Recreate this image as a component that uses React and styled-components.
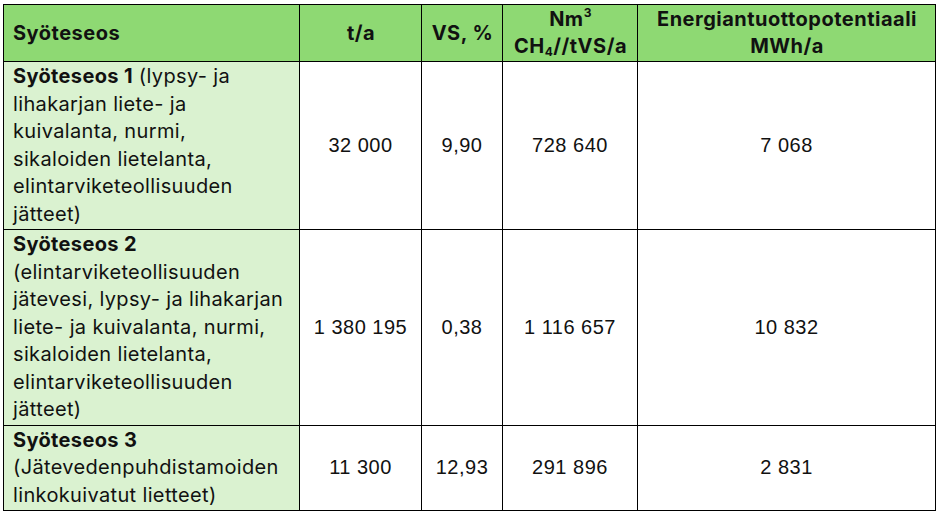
import React from 'react';
import styled, { createGlobalStyle } from 'styled-components';

const GlobalStyle = createGlobalStyle`
  body {
    margin: 0;
    background: #ffffff;
  }
`;

const Page = styled.div`
  padding: 4px 3px;
`;

const Table = styled.table`
  width: 932px;
  table-layout: fixed;
  border-collapse: collapse;
  color: #111111;
`;

const Col = styled.col`
  width: ${(p) => p.w}px;
`;

const HeadCell = styled.th`
  background: #8ed973;
  border: 1.5px solid #000;
  font-family: Inter, 'Liberation Sans', sans-serif;
  font-weight: 700;
  font-size: 20px;
  letter-spacing: 0.5px;
  line-height: 27px;
  padding: 1px 8px 1px 9px;
  text-align: ${(p) => (p.$left ? 'left' : 'center')};
  vertical-align: middle;
`;

const Sup = styled.sup`
  font-size: 12px;
  line-height: 0;
  vertical-align: 0;
  position: relative;
  top: -9px;
`;

const Sub = styled.sub`
  font-size: 12px;
  line-height: 0;
  vertical-align: 0;
  position: relative;
  top: 3px;
`;

const NameCell = styled.td`
  background: #daf2d0;
  border: 1.5px solid #000;
  font-family: Inter, 'Noto Sans', sans-serif;
  font-size: 20px;
  letter-spacing: 0.35px;
  line-height: 27.5px;
  padding: 1px 12px 1px 9px;
  vertical-align: top;
`;

const Name = styled.b`
  font-weight: 700;
`;

const NumCell = styled.td`
  border: 1.5px solid #000;
  font-family: 'Liberation Sans', Arial, sans-serif;
  font-size: 20px;
  letter-spacing: 0.5px;
  text-align: center;
  vertical-align: middle;
  padding: 0 4px;
`;

const rows = [
  {
    name: 'Syöteseos 1',
    desc: ' (lypsy- ja lihakarjan liete- ja kuivalanta, nurmi, sikaloiden lietelanta, elintarviketeollisuuden jätteet)',
    ta: '32 000',
    vs: '9,90',
    nm: '728 640',
    mwh: '7 068',
  },
  {
    name: 'Syöteseos 2',
    desc: ' (elintarviketeollisuuden jätevesi, lypsy- ja lihakarjan liete- ja kuivalanta, nurmi, sikaloiden lietelanta, elintarviketeollisuuden jätteet)',
    ta: '1 380 195',
    vs: '0,38',
    nm: '1 116 657',
    mwh: '10 832',
  },
  {
    name: 'Syöteseos 3',
    desc: ' (Jätevedenpuhdistamoiden linkokuivatut lietteet)',
    ta: '11 300',
    vs: '12,93',
    nm: '291 896',
    mwh: '2 831',
  },
];

export default function App() {
  return (
    <Page>
      <GlobalStyle />
      <Table>
        <colgroup>
          <Col w={296} />
          <Col w={122} />
          <Col w={81} />
          <Col w={135} />
          <Col w={298} />
        </colgroup>
        <thead>
          <tr>
            <HeadCell $left>Syöteseos</HeadCell>
            <HeadCell>t/a</HeadCell>
            <HeadCell>VS, %</HeadCell>
            <HeadCell>
              Nm<Sup>3</Sup>
              <br />
              CH<Sub>4</Sub>//tVS/a
            </HeadCell>
            <HeadCell>
              Energiantuottopotentiaali
              <br />
              MWh/a
            </HeadCell>
          </tr>
        </thead>
        <tbody>
          {rows.map((r) => (
            <tr key={r.name}>
              <NameCell>
                <Name>{r.name}</Name>
                {r.desc}
              </NameCell>
              <NumCell>{r.ta}</NumCell>
              <NumCell>{r.vs}</NumCell>
              <NumCell>{r.nm}</NumCell>
              <NumCell>{r.mwh}</NumCell>
            </tr>
          ))}
        </tbody>
      </Table>
    </Page>
  );
}
